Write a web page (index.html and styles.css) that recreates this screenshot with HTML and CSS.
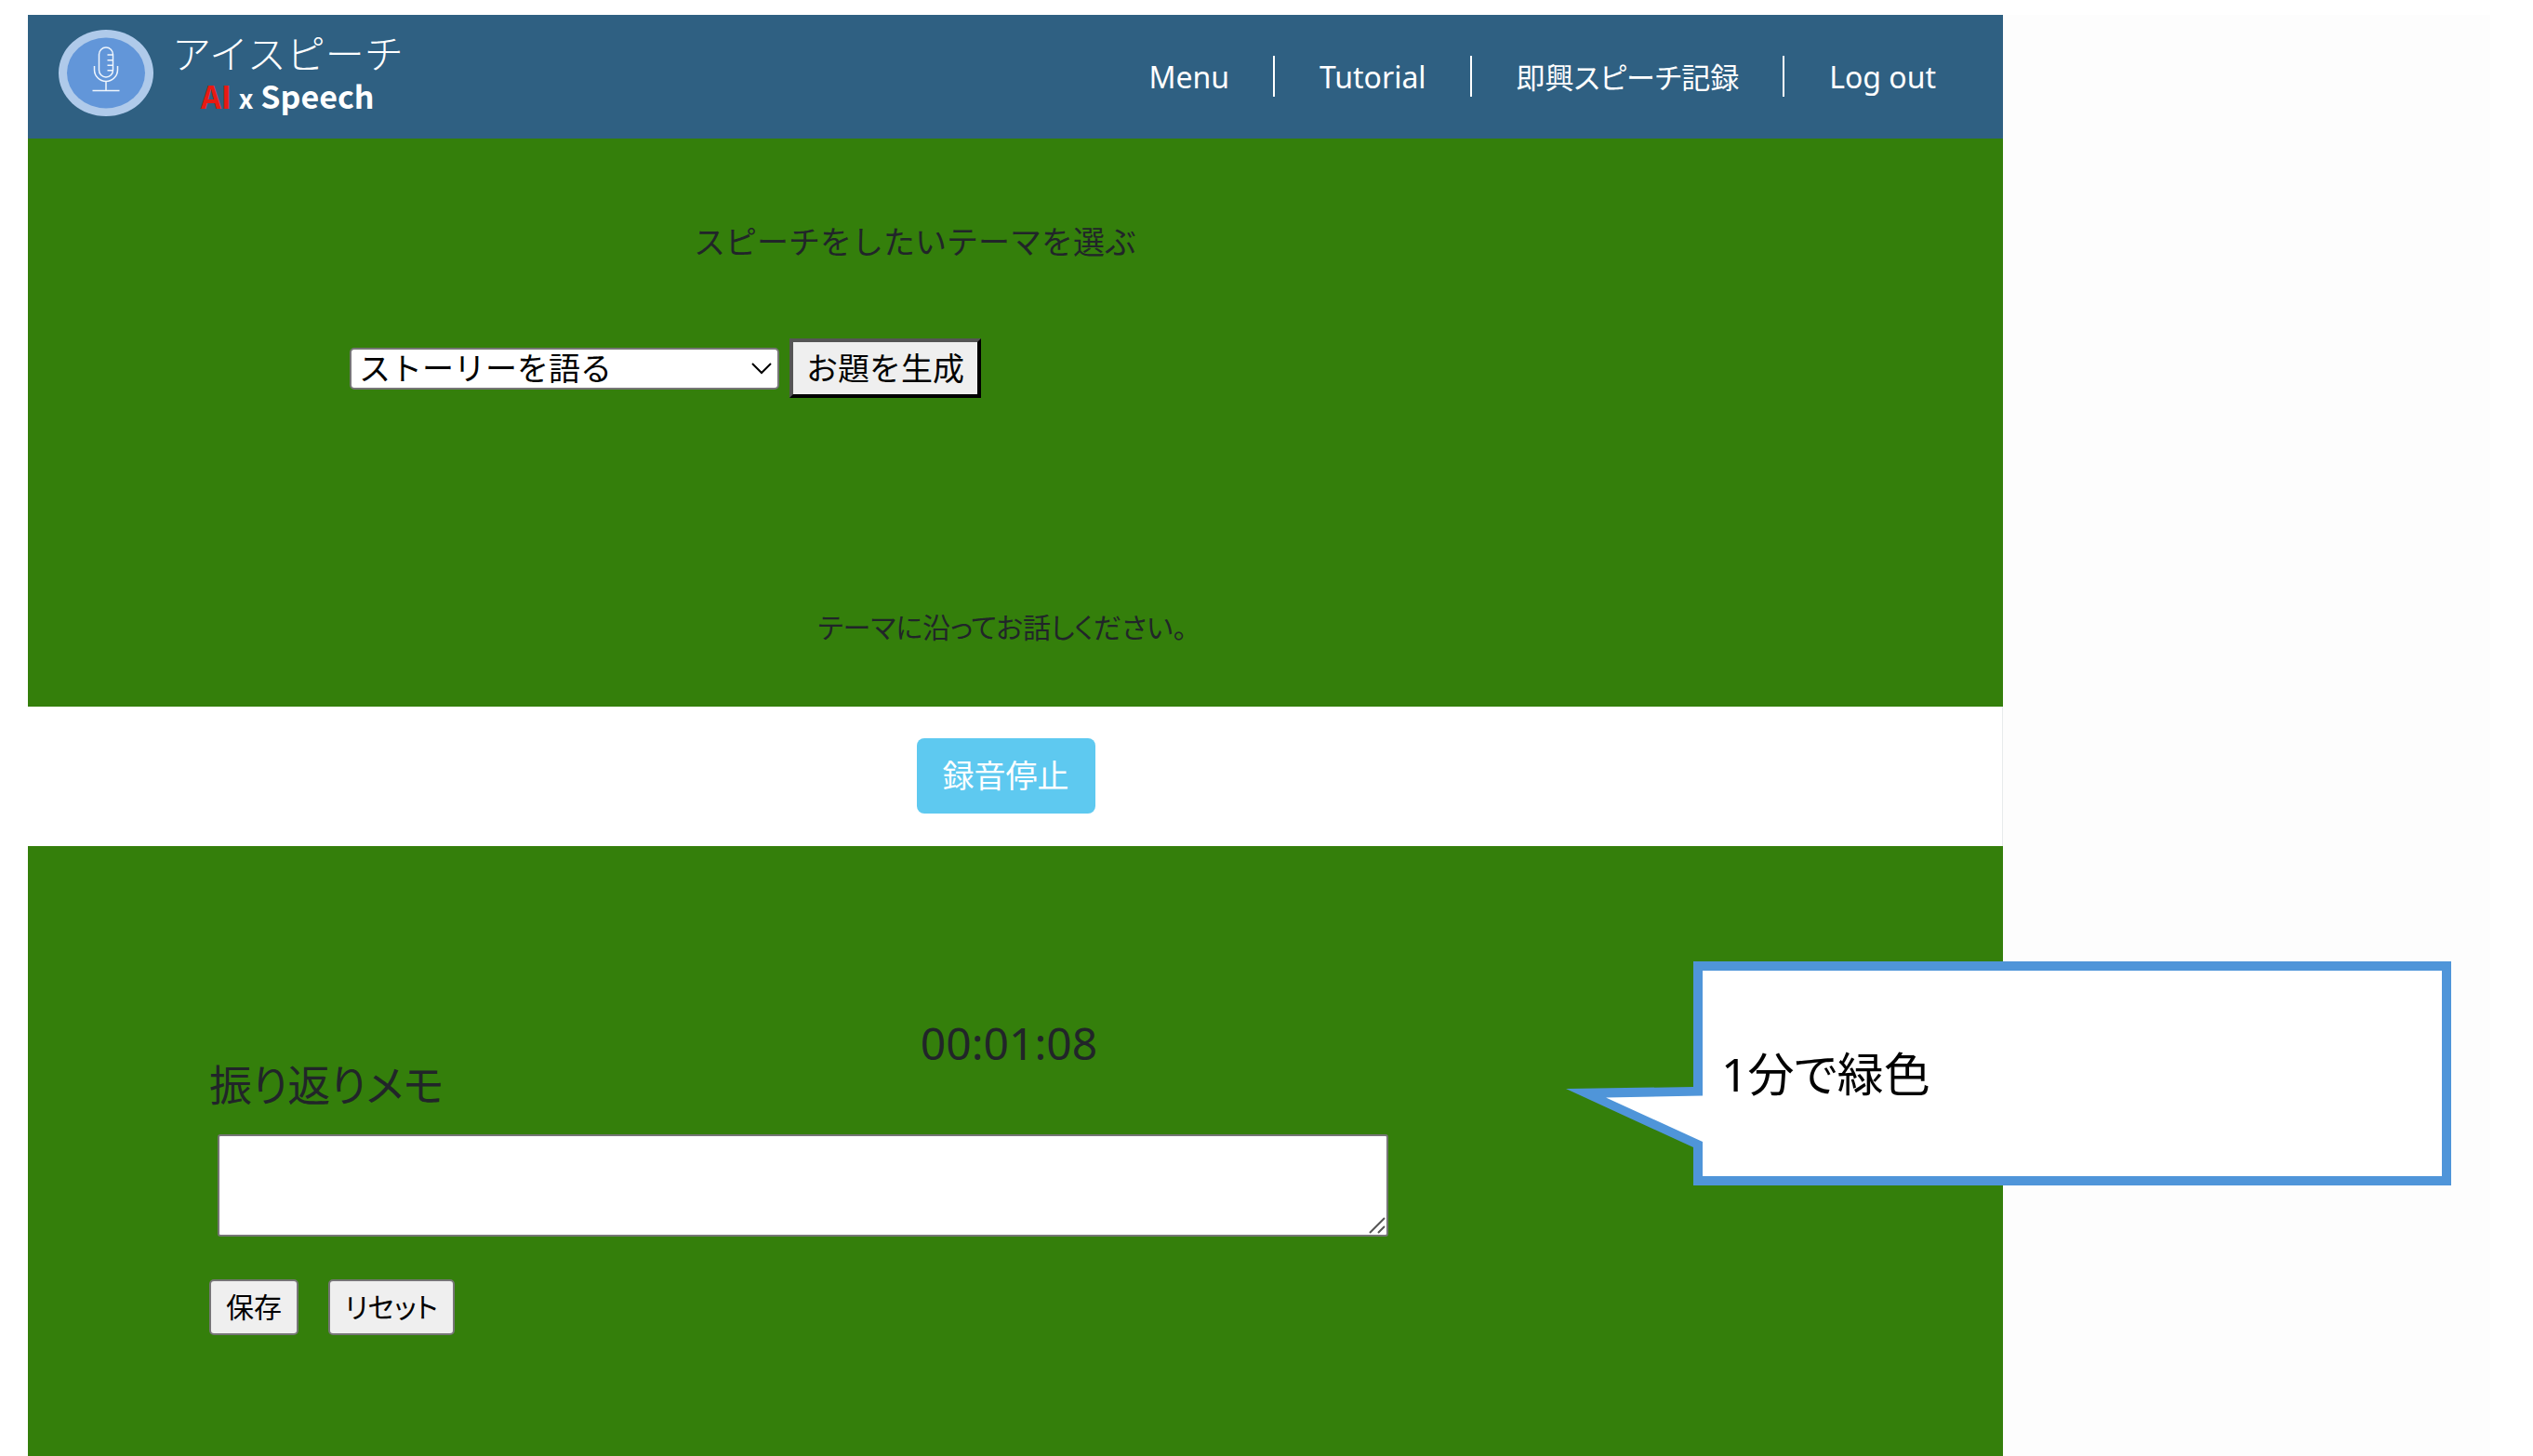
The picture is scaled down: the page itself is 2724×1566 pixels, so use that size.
FILE: index.html
```html
<!DOCTYPE html>
<html lang="ja">
<head>
<meta charset="utf-8">
<meta name="viewport" content="width=device-width, initial-scale=1">
<title>アイスピーチ</title>
<link rel="stylesheet" href="styles.css">
</head>
<body>
<div class="slide">
  <div class="app">
    <header class="header">
      <div class="brand">
        <svg class="brand-icon" viewBox="0 0 102 93" aria-hidden="true">
          <ellipse cx="51" cy="46.500" rx="51" ry="46.500" fill="#afcaea"/>
          <ellipse cx="51" cy="46.500" rx="42" ry="38" fill="#6296d9"/>
          <g fill="none" stroke="#f0f6fd" stroke-width="1.500">
            <rect x="43.500" y="19" width="15" height="32" rx="7.500"/>
            <path d="M52.500 27h6M52.500 32.700h6M52.500 38.300h6M52.500 43.700h6"/>
            <path d="M38.500 39v4a12.500 12.500 0 0 0 25 0v-4M51 55.500v10M36.500 65.500h29"/>
          </g>
        </svg>
        <div class="brand-text">
          <span class="brand-name">アイスピーチ</span>
          <span class="brand-sub"><span class="brand-ai">AI</span> <small>x</small> Speech</span>
        </div>
      </div>
      <nav class="nav">
        <a href="#menu">Menu</a>
        <a href="#tutorial">Tutorial</a>
        <a href="#records" class="nav-ja">即興スピーチ記録</a>
        <a href="#logout">Log out</a>
      </nav>
    </header>

    <main class="main">
      <section class="theme">
        <label class="theme-label" for="theme">スピーチをしたいテーマを選ぶ</label>
        <div class="theme-row">
          <span class="select-box">
            <select id="theme" class="select"><option>ストーリーを語る</option></select>
            <svg class="chevron" viewBox="0 0 22 13" aria-hidden="true"><path d="M1 1l10 10L21 1" fill="none" stroke="#000" stroke-width="2"/></svg>
          </span>
          <button class="generate" type="button">お題を生成</button>
        </div>
        <p class="prompt">テーマに沿ってお話しください。</p>
      </section>

      <section class="record">
        <button class="stop" type="button">録音停止</button>
      </section>

      <section class="memo">
        <div class="memo-head">
          <label class="memo-label" for="memo">振り返りメモ</label>
          <time class="timer">00:01:08</time>
        </div>
        <div class="memo-box">
          <textarea id="memo" class="memo-text"></textarea>
          <svg class="grip" viewBox="0 0 18 18" aria-hidden="true"><path d="M1 17L17 1M10 17L17 10" fill="none" stroke="#555" stroke-width="2"/></svg>
        </div>
        <div class="memo-actions">
          <button class="plain" type="button">保存</button>
          <button class="plain" type="reset">リセット</button>
        </div>
      </section>
    </main>
  </div>
  <div class="margin"></div>

  <aside class="callout">
    <svg class="callout-tail" viewBox="0 0 147 76" aria-hidden="true">
      <path d="M0 6L137 4h10v70L137 69z" fill="#4f95d9"/>
      <path d="M43 15.500L147 13.500V63z" fill="#fff"/>
    </svg>
    1分で緑色
  </aside>
</div>
</body>
</html>
```
FILE: styles.css
```css
* {
  box-sizing: border-box;
}

body {
  margin: 0;
  background: #fff;
  color: #212529;
  font-family: "Noto Sans", "Noto Sans CJK JP", sans-serif;
  font-size: 34px;
  line-height: 48px;
}

button,
select,
textarea {
  margin: 0;
  font: inherit;
  color: #000;
}

.slide {
  position: relative;
  display: grid;
  grid-template-columns: 2124fr 524fr;
  min-height: 100vh;
  padding: 16px 46px 0 30px;
}

.app {
  display: flex;
  flex-direction: column;
}

.margin {
  background: #fdfdfd;
}

/* Header */
.header {
  display: flex;
  align-items: center;
  justify-content: space-between;
  padding: 16px 72px 24px 33px;
  background: #2f6082;
  color: #fff;
}

.brand {
  display: flex;
  align-items: center;
  gap: 20px;
}

.brand-icon {
  width: 102px;
  height: 93px;
}

.brand-text {
  display: flex;
  flex-direction: column;
  align-items: center;
  gap: 3px;
  padding-top: 2px;
  font-family: "Noto Sans CJK JP", sans-serif;
  line-height: 44px;
}

.brand-name {
  font-size: 42px;
  font-weight: 300;
}

.brand-sub {
  font-size: 34px;
  font-weight: 700;
}

.brand-sub small {
  font-size: 28px;
  line-height: 28px;
}

.brand-ai {
  color: #e81a12;
}

.nav {
  display: flex;
  align-items: center;
  padding-top: 6px;
}

.nav a {
  padding: 2px 0 0 48px;
  color: #fff;
  font-size: 32px;
  line-height: 42px;
  text-decoration: none;
  font-feature-settings: "palt";
}

.nav .nav-ja {
  font-size: 31px;
}

.nav a:not(:last-child) {
  padding-right: 47px;
  border-right: 2px solid #fff;
}

/* Theme */
.main {
  display: flex;
  flex: 1;
  flex-direction: column;
}

.theme {
  display: flex;
  flex-direction: column;
  padding: 87px 28px 61px 0;
  background: #347f0b;
}

.theme-label {
  padding-right: 188px;
  text-align: center;
}

.theme-row {
  display: flex;
  align-items: center;
  gap: 11px;
  margin-top: 80px;
  padding-left: 346px;
}

.select-box {
  display: grid;
  align-items: center;
  width: 462px;
}

.select-box > * {
  grid-area: 1 / 1;
}

.select {
  appearance: none;
  height: 45px;
  padding: 0 8px;
  border: 2px solid #767676;
  border-radius: 5px;
  background: #fff;
  line-height: 40px;
}

.chevron {
  justify-self: end;
  width: 22px;
  height: 13px;
  margin-right: 8px;
  pointer-events: none;
}

.generate {
  padding: 4px 14px;
  border: 4px solid;
  border-color: #555 #000 #000 #555;
  background: #efefef;
}

.prompt {
  margin: 223px 0 0;
  font-size: 30px;
  text-align: center;
  font-feature-settings: "palt";
}

/* Recording */
.record {
  display: flex;
  justify-content: center;
  padding: 34px 20px 35px 0;
  border-right: 1px solid #e8ebec;
  background: #fff;
}

.stop {
  padding: 16px 28px 17px;
  border: 0;
  border-radius: 8px;
  background: #5ec9f0;
  color: #fff;
}

/* Memo */
.memo {
  display: flex;
  flex: 1;
  flex-direction: column;
  padding: 184px 14px 100px 195px;
  background: #347f0b;
}

.memo-head {
  display: grid;
  grid-template-columns: 1fr auto 1fr;
  height: 104px;
  margin-right: 195px;
}

.memo-label {
  align-self: end;
  font-size: 46px;
  line-height: 64px;
  font-feature-settings: "palt";
}

.timer {
  font-size: 48px;
  line-height: 56px;
}

.memo-box {
  display: grid;
  width: 66%;
  margin: 22px 0 0 9px;
  padding-right: 5px;
}

.memo-box > * {
  grid-area: 1 / 1;
}

.memo-text {
  width: 100%;
  height: 110px;
  border: 2px solid #767676;
  border-radius: 3px;
  background: #fff;
  resize: none;
}

.grip {
  place-self: end;
  width: 18px;
  height: 18px;
  margin: 0 3px 3px 0;
  pointer-events: none;
}

.memo-actions {
  display: flex;
  gap: 32px;
  margin-top: 46px;
}

.plain {
  padding: 4px 16px;
  border: 2px solid #767676;
  border-radius: 5px;
  background: #efefef;
  font-size: 30px;
  font-feature-settings: "palt";
}

/* Callout laid over the screen */
.callout {
  position: absolute;
  top: 1034px;
  right: 88px;
  display: flex;
  align-items: center;
  width: 815px;
  height: 241px;
  padding-left: 20px;
  border: 10px solid #4f95d9;
  background: #fff;
  color: #000;
  font-size: 50px;
  font-feature-settings: "palt";
}

.callout-tail {
  position: absolute;
  top: 121px;
  left: -147px;
  width: 147px;
  height: 76px;
}
```
